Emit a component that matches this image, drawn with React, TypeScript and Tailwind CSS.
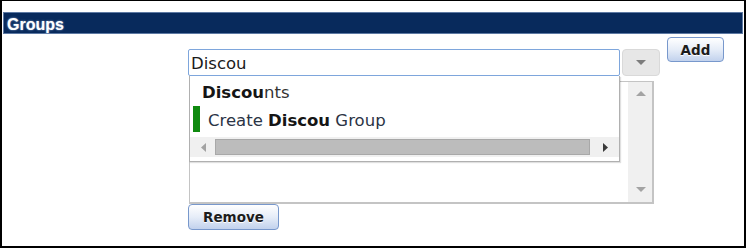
import React from "react";

const sans = { fontFamily: '"DejaVu Sans", Verdana, sans-serif' };

function Tri({ dir, color, w, h }: { dir: "up" | "down" | "left" | "right"; color: string; w: number; h: number }) {
  const pts =
    dir === "up"
      ? `0,${h} ${w},${h} ${w / 2},0`
      : dir === "down"
      ? `0,0 ${w},0 ${w / 2},${h}`
      : dir === "left"
      ? `${w},0 ${w},${h} 0,${h / 2}`
      : `0,0 0,${h} ${w},${h / 2}`;
  return (
    <svg width={w} height={h} viewBox={`0 0 ${w} ${h}`} className="block">
      <polygon points={pts} fill={color} />
    </svg>
  );
}

export default function App() {
  return (
    <div
      className="box-border h-[248px] w-[746px] overflow-hidden border-t border-r-2 border-b-2 border-l-2 border-black bg-white"
      style={sans}
    >
      {/* Header */}
      <div className="mx-px mt-[11px] h-[22px] border border-[#5d79a3] bg-[#082a5c] pl-[3px]">
        <span
          className="block h-[20px] text-[16px] leading-[23px] font-bold text-white [text-shadow:0_0_2px_#9fb4d6]"
          style={{ fontFamily: '"Liberation Sans", Arial, sans-serif' }}
        >
          Groups
        </span>
      </div>

      {/* Body */}
      <div className="mt-[3px] pl-[186px]">
        <div className="relative w-[540px]">
          <div className="flex items-start">
            <div className="mt-[12px] box-border h-[27px] w-[432px] rounded-[2px] border border-[#7ea6dc] pl-[2px] pt-px text-[16.5px] leading-[25px] text-[#1a1a1a]">
              Discou
            </div>
            <div className="mt-[12px] ml-[2px] box-border flex h-[27px] w-[38px] items-center justify-center rounded-[4px] border border-[#d9d9d9] bg-[#e7e7e7]">
              <Tri dir="down" color="#7c7c7c" w={10} h={5} />
            </div>
            <button className="ml-[7px] box-border h-[25px] w-[57px] rounded-[4px] border border-[#7898cc] bg-gradient-to-b from-[#ffffff] via-[#e6edf8] to-[#c2d2ed] text-[13.5px] leading-[22px] font-bold text-[#1c1c1c] [text-shadow:0_1px_0_#ffffff]">
              Add
            </button>
          </div>

          {/* Listbox */}
          <div className="mt-[5px] ml-px box-border flex h-[123px] w-[465px] justify-end border border-r-2 border-b-2 border-[#c4c4c4]">
            <div className="flex w-[24px] flex-col items-center justify-between bg-[#f0f0f0] pt-[9px] pb-[10px] pl-[1px]">
              <Tri dir="up" color="#a3a3a3" w={10} h={5} />
              <Tri dir="down" color="#a3a3a3" w={10} h={5} />
            </div>
          </div>

          <button className="box-border h-[26px] w-[91px] rounded-[4px] border border-[#7898cc] bg-gradient-to-b from-[#ffffff] via-[#e6edf8] to-[#c2d2ed] text-[13.5px] leading-[23px] font-bold text-[#1c1c1c] [text-shadow:0_1px_0_#ffffff]">
            Remove
          </button>

          {/* Autocomplete popup */}
          <div className="absolute top-[39px] left-px box-border h-[86px] w-[431px] border-x border-b border-[#b0b0b0] bg-white shadow-[1px_1px_1px_rgba(0,0,0,0.12)]">
            <div className="h-[30px] pt-[3px] pl-[12px] text-[16.5px] leading-[27px] text-[#333]">
              <b className="text-[#151515]">Discou</b>nts
            </div>
            <div className="flex h-[26px] items-stretch">
              <div className="ml-[3px] w-[7px] bg-[#0f8a0f]" />
              <div className="ml-[8px] text-[16.5px] leading-[29px] text-[#2b3445]">
                Create <b className="text-[#151515]">Discou</b> Group
              </div>
            </div>
            <div className="mt-[5px] flex h-[20px] items-center bg-[#f0f0f0]">
              <div className="flex w-[25px] justify-center pl-[1px]">
                <Tri dir="left" color="#a3a3a3" w={5} h={9} />
              </div>
              <div className="box-border h-[16px] w-[375px] border border-[#a8a8a8] bg-[#bcbcbc]" />
              <div className="flex w-[29px] justify-center pl-[2px]">
                <Tri dir="right" color="#3a3a3a" w={5} h={9} />
              </div>
            </div>
          </div>
        </div>
      </div>
    </div>
  );
}
